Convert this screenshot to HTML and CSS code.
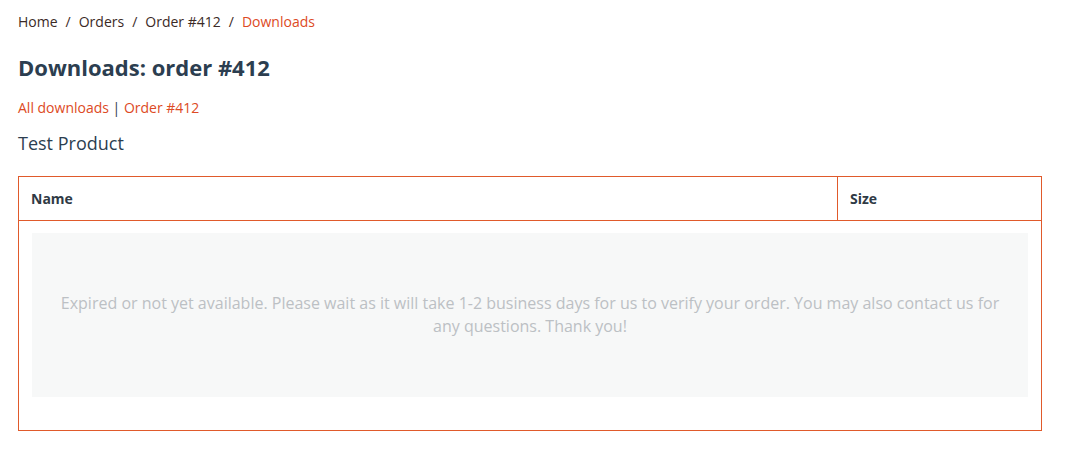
FILE: index.html
```html
<!DOCTYPE html>
<html>
<head>
<meta charset="utf-8">
<link rel="stylesheet" href="styles.css">
</head>
<body>
<div class="page">
  <nav class="breadcrumb">
    <a href="#" class="crumb">Home</a><span class="sep">/</span><a href="#" class="crumb">Orders</a><span class="sep">/</span><a href="#" class="crumb">Order #412</a><span class="sep">/</span><span class="crumb current">Downloads</span>
  </nav>
  <h1 class="title">Downloads: order #412</h1>
  <div class="links"><a href="#">All downloads</a> | <a href="#">Order #412</a></div>
  <h2 class="product">Test Product</h2>
  <table class="files">
    <thead>
      <tr><th class="col-name">Name</th><th class="col-size">Size</th></tr>
    </thead>
    <tbody>
      <tr><td colspan="2" class="body-cell">
        <div class="notice">Expired or not yet available. Please wait as it will take 1-2 business days for us to verify your order. You may also contact us for any questions. Thank you!</div>
      </td></tr>
    </tbody>
  </table>
</div>
</body>
</html>
```
FILE: styles.css
```css
html, body { margin: 0; padding: 0; background: #fff; }
body { font-family: "Open Sans", "DejaVu Sans", sans-serif; color: #2c3e50; }
.page { padding: 12px 18px 0 18px; width: 1024px; }
.breadcrumb { font-size: 14px; line-height: 20px; color: #3b2a26; }
.breadcrumb .crumb { color: #3b2a26; text-decoration: none; }
.breadcrumb .current { color: #dd4a24; }
.breadcrumb .sep { margin: 0 8px; }
.title { font-size: 22px; font-weight: 700; margin: 20px 0 0 0; line-height: 30px; color: #2c3e50; }
.links { font-size: 14px; line-height: 20px; margin-top: 16px; color: #2c3e50; }
.links a { color: #dd4a24; text-decoration: none; }
.product { font-size: 18px; font-weight: 400; margin: 13px 0 0 0; line-height: 24px; color: #2c3e50; }
.files { margin-top: 21px; width: 1024px; border-collapse: collapse; border: 1px solid #e05a2b; }
.files th { text-align: left; font-size: 14px; font-weight: 700; color: #2f3a45; height: 43px; padding: 0 12px; border: 1px solid #e05a2b; }
.files .col-size { width: 179px; }
.body-cell { padding: 12px 13px 33px 13px; }
.notice { background: #f7f8f8; color: #bcc0c4; font-size: 16px; line-height: 23px; text-align: center; padding: 59px 20px; }
```
